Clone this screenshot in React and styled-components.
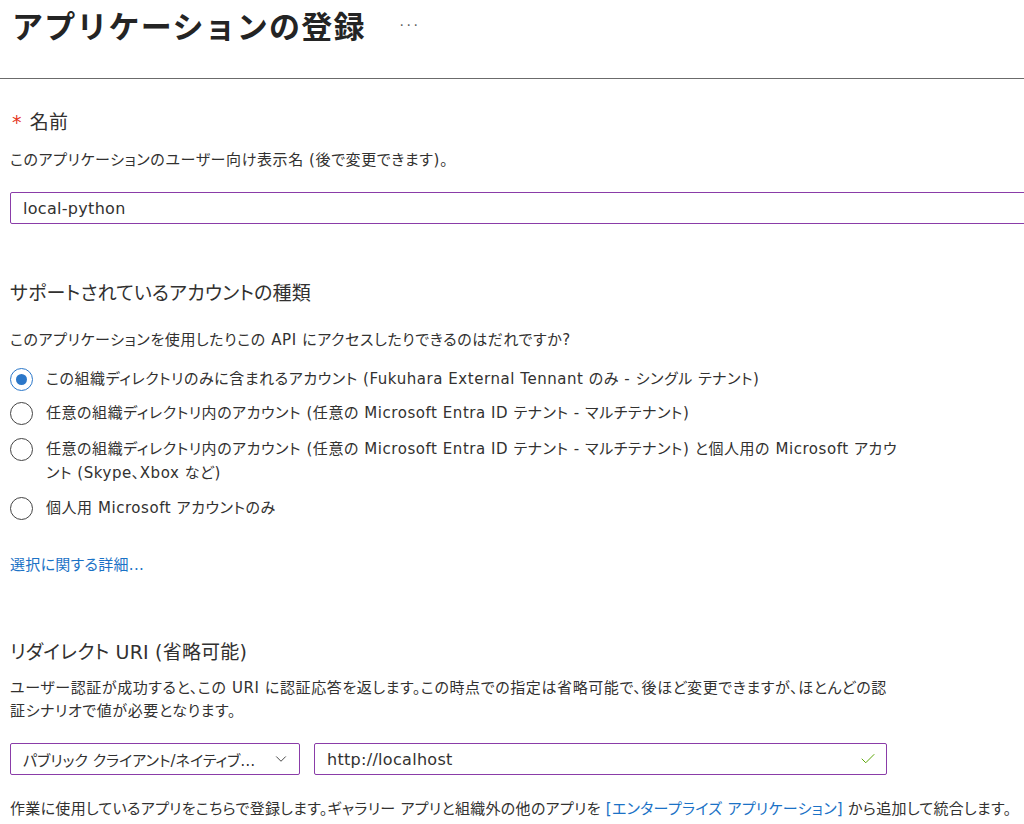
import styled, { createGlobalStyle } from "styled-components";
import { ChevronDown, Check } from "lucide-react";

const GlobalStyle = createGlobalStyle`
  html, body {
    margin: 0;
    padding: 0;
    background: #ffffff;
  }
  body {
    font-family: "DejaVu Sans", "Noto Sans CJK JP", sans-serif;
    font-feature-settings: "palt";
    color: #323130;
    overflow: hidden;
  }
`;

const Page = styled.div`
  width: 1024px;
  height: 824px;
  overflow: hidden;
`;

const Header = styled.header`
  display: flex;
  align-items: center;
  gap: 34px;
  height: 48px;
  padding: 0 0 30px 12px;
  border-bottom: 1px solid #6b6b6b;
`;

const Title = styled.h1`
  margin: 0;
  font-family: "Noto Sans CJK JP", sans-serif;
  font-feature-settings: normal;
  font-size: 31px;
  font-weight: 700;
  color: #242424;
  letter-spacing: 1.2px;
`;

const More = styled.span`
  font-size: 14px;
  color: #605e5c;
  letter-spacing: 2.5px;
  margin-top: 2px;
`;

const Body = styled.main`
  padding: 0 10px;
`;

const Section = styled.section`
  max-width: 914px;
  margin-top: ${(p) => p.$top}px;
`;

const Heading = styled.h2`
  margin: 0;
  font-size: 19px;
  font-weight: 400;
  line-height: 28px;
  letter-spacing: 0.2px;
  color: #323130;
`;

const Required = styled.span`
  color: #e5361c;
  margin: 0 8px 0 2px;
`;

const Desc = styled.p`
  margin: ${(p) => p.$top || 0}px 0 0;
  max-width: ${(p) => p.$max || "none"};
  font-size: 15px;
  line-height: 23px;
  letter-spacing: 0.6px;
  color: #323130;
`;

const TextBox = styled.div`
  display: flex;
  align-items: center;
  box-sizing: border-box;
  height: 32px;
  padding: 0 9px 0 12px;
  border: 1px solid #8a3ca8;
  border-radius: 2px;
  font-size: 16px;
  color: #323130;
  width: ${(p) => p.$width || "auto"};
  margin-top: ${(p) => p.$top || 0}px;
  margin-right: ${(p) => (p.$bleed ? "-40px" : "0")};
`;

const TextValue = styled.span`
  flex: 1;
  min-width: 0;
  white-space: nowrap;
  overflow: hidden;
  text-overflow: ellipsis;
  font-size: ${(p) => p.$size || 16}px;
  letter-spacing: ${(p) => (p.$tight ? "0" : "0.3px")};
`;

const RadioList = styled.div`
  display: flex;
  flex-direction: column;
  margin-top: 15px;
`;

const RadioRow = styled.label`
  display: flex;
  align-items: flex-start;
  gap: 13px;
  margin-bottom: ${(p) => p.$gap}px;
  font-size: 15px;
  line-height: 24px;
  letter-spacing: 0.55px;
`;

const RadioCircle = styled.span`
  flex: none;
  box-sizing: border-box;
  width: 23px;
  height: 23px;
  margin-top: 1px;
  border-radius: 50%;
  border: 1.5px solid ${(p) => (p.$checked ? "#2b77c9" : "#444444")};
  display: flex;
  align-items: center;
  justify-content: center;
  &::after {
    content: "";
    width: 11px;
    height: 11px;
    border-radius: 50%;
    background: #2b77c9;
    display: ${(p) => (p.$checked ? "block" : "none")};
  }
`;

const RadioText = styled.span`
  max-width: 856px;
`;

const Link = styled.a`
  color: #1b72c6;
  text-decoration: none;
  cursor: pointer;
`;

const MoreLink = styled(Link)`
  display: block;
  margin-top: 33px;
  font-size: 15px;
  letter-spacing: 0.3px;
`;

const InputRow = styled.div`
  display: flex;
  gap: 14px;
  margin-top: 20px;
`;

const SelectChevron = styled(ChevronDown)`
  flex: none;
  margin-left: 12px;
  color: #444;
`;

const CheckMark = styled(Check)`
  flex: none;
  color: #57a300;
`;

const Footer = styled.p`
  margin: 22px 0 0;
  font-size: 15px;
  letter-spacing: 0.3px;
  white-space: nowrap;
`;

const accounts = [
  {
    label:
      "この組織ディレクトリのみに含まれるアカウント (Fukuhara External Tennant のみ - シングル テナント)",
    checked: true,
    gap: 10,
  },
  {
    label:
      "任意の組織ディレクトリ内のアカウント (任意の Microsoft Entra ID テナント - マルチテナント)",
    gap: 12,
  },
  {
    label:
      "任意の組織ディレクトリ内のアカウント (任意の Microsoft Entra ID テナント - マルチテナント) と個人用の Microsoft アカウント (Skype、Xbox など)",
    gap: 11,
  },
  { label: "個人用 Microsoft アカウントのみ", gap: 0 },
];

export default function App() {
  return (
    <Page>
      <GlobalStyle />
      <Header>
        <Title>アプリケーションの登録</Title>
        <More>···</More>
      </Header>
      <Body>
        <Section $top={29}>
          <Heading>
            <Required>*</Required>名前
          </Heading>
          <Desc $top={13}>
            このアプリケーションのユーザー向け表示名 (後で変更できます)。
          </Desc>
        </Section>
        <TextBox $bleed $top={20}>
          <TextValue>local-python</TextValue>
        </TextBox>

        <Section $top={55}>
          <Heading>サポートされているアカウントの種類</Heading>
          <Desc $top={22}>
            このアプリケーションを使用したりこの API
            にアクセスしたりできるのはだれですか?
          </Desc>
          <RadioList>
            {accounts.map((a) => (
              <RadioRow key={a.label} $gap={a.gap}>
                <RadioCircle $checked={a.checked} />
                <RadioText>{a.label}</RadioText>
              </RadioRow>
            ))}
          </RadioList>
          <MoreLink>選択に関する詳細...</MoreLink>
        </Section>

        <Section $top={64}>
          <Heading>リダイレクト URI (省略可能)</Heading>
          <Desc $top={11} $max="884px">
            ユーザー認証が成功すると、この URI
            に認証応答を返します。この時点での指定は省略可能で、後ほど変更できますが、ほとんどの認証シナリオで値が必要となります。
          </Desc>
          <InputRow>
            <TextBox $width="290px">
              <TextValue $size={15} $tight>
                パブリック クライアント/ネイティブ (モバイルとデスクトップ)
              </TextValue>
              <SelectChevron size={18} strokeWidth={1.3} />
            </TextBox>
            <TextBox $width="573px">
              <TextValue>http://localhost</TextValue>
              <CheckMark size={18} strokeWidth={1.3} />
            </TextBox>
          </InputRow>
        </Section>

        <Footer>
          作業に使用しているアプリをこちらで登録します。ギャラリー
          アプリと組織外の他のアプリを{" "}
          <Link>[エンタープライズ アプリケーション]</Link>{" "}
          から追加して統合します。
        </Footer>
      </Body>
    </Page>
  );
}
